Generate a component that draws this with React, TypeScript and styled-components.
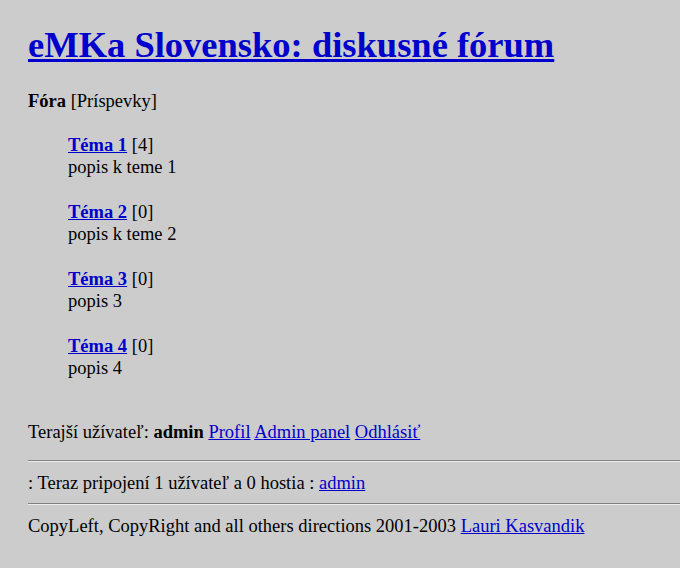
import styled, { createGlobalStyle } from "styled-components";

const GlobalStyle = createGlobalStyle`
    html, body {
        margin: 0;
        background: #cccccc;
    }
    body {
        font-family: "Liberation Serif", "Times New Roman", serif;
        font-size: 18.5px;
        line-height: 22px;
        color: #000000;
    }
`;

const topics = [
    { name: "Téma 1", count: 4, desc: "popis k teme 1" },
    { name: "Téma 2", count: 0, desc: "popis k teme 2" },
    { name: "Téma 3", count: 0, desc: "popis 3" },
    { name: "Téma 4", count: 0, desc: "popis 4" },
];

export default function App() {
    return (
        <>
            <GlobalStyle />
            <Page>
                <Title>
                    <Link href="#">eMKa Slovensko: diskusné fórum</Link>
                </Title>
                <Crumbs>
                    <b>Fóra</b> [Príspevky]
                </Crumbs>
                <TopicList>
                    {topics.map((t) => (
                        <Topic key={t.name}>
                            <div>
                                <TopicLink href="#">{t.name}</TopicLink> [{t.count}]
                            </div>
                            <div>{t.desc}</div>
                        </Topic>
                    ))}
                </TopicList>
                <UserLine>
                    Terajší užívateľ: <b>admin</b> <Link href="#">Profil</Link>{" "}
                    <Link href="#">Admin panel</Link> <Link href="#">Odhlásiť</Link>
                </UserLine>
                <Rule />
                <Line>
                    : Teraz pripojení 1 užívateľ a 0 hostia : <Link href="#">admin</Link>
                </Line>
                <Rule />
                <Line>
                    CopyLeft, CopyRight and all others directions 2001-2003{" "}
                    <Link href="#">Lauri Kasvandik</Link>
                </Line>
            </Page>
        </>
    );
}

const Page = styled.div`
    padding: 24px 0 0 28px;
`;

const Link = styled.a`
    color: #0000cc;
    text-decoration: underline;
`;

const Title = styled.h1`
    margin: 0 0 24px;
    font-size: 36.5px;
    line-height: 42px;
    font-weight: bold;
`;

const Crumbs = styled.p`
    margin: 0 0 22px;
`;

const TopicList = styled.div`
    display: flex;
    flex-direction: column;
    gap: 23px;
    padding-left: 40px;
`;

const Topic = styled.div``;

const TopicLink = styled(Link)`
    font-weight: bold;
`;

const UserLine = styled.p`
    margin: 42px 0 17px;
`;

const Rule = styled.hr`
    margin: 0;
    border: none;
    border-top: 1px solid #808080;
    border-bottom: 1px solid #eeeeee;
`;

const Line = styled.p`
    margin: 10px 0 9px;
`;
